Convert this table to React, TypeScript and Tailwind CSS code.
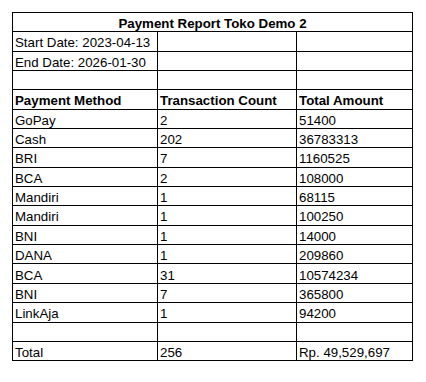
import React from 'react';

const rows = [
  { method: 'GoPay', count: '2', amount: '51400' },
  { method: 'Cash', count: '202', amount: '36783313' },
  { method: 'BRI', count: '7', amount: '1160525' },
  { method: 'BCA', count: '2', amount: '108000' },
  { method: 'Mandiri', count: '1', amount: '68115' },
  { method: 'Mandiri', count: '1', amount: '100250' },
  { method: 'BNI', count: '1', amount: '14000' },
  { method: 'DANA', count: '1', amount: '209860' },
  { method: 'BCA', count: '31', amount: '10574234' },
  { method: 'BNI', count: '7', amount: '365800' },
  { method: 'LinkAja', count: '1', amount: '94200' },
];

const Cell: React.FC<{ children?: React.ReactNode; bold?: boolean }> = ({ children, bold }) => (
  <div
    className={`h-[19.35px] border-r border-b border-black px-[2px] flex items-end pb-[1px] whitespace-nowrap overflow-hidden ${
      bold ? 'font-bold' : ''
    }`}
  >
    {children}
  </div>
);

const Row: React.FC<{ a?: string; b?: string; c?: string; bold?: boolean }> = ({ a, b, c, bold }) => (
  <>
    <Cell bold={bold}>{a}</Cell>
    <Cell bold={bold}>{b}</Cell>
    <Cell bold={bold}>{c}</Cell>
  </>
);

const App: React.FC = () => {
  return (
    <div className="w-[426px] h-[382px] bg-white pt-[12px] pl-[12px] text-black text-[13.3px] leading-none font-['Liberation_Sans',Arial,sans-serif]">
      <div className="w-[401px] grid grid-cols-[145px_139px_116px] border-l border-t border-black">
        <div className="col-span-3 h-[19.35px] border-r border-b border-black flex items-end justify-center pb-[1px] font-bold">
          Payment Report Toko Demo 2
        </div>
        <Row a="Start Date: 2023-04-13" />
        <Row a="End Date: 2026-01-30" />
        <Row />
        <Row a="Payment Method" b="Transaction Count" c="Total Amount" bold />
        {rows.map((r, i) => (
          <Row key={i} a={r.method} b={r.count} c={r.amount} />
        ))}
        <Row />
        <Row a="Total" b="256" c="Rp. 49,529,697" />
      </div>
    </div>
  );
};

export default App;
